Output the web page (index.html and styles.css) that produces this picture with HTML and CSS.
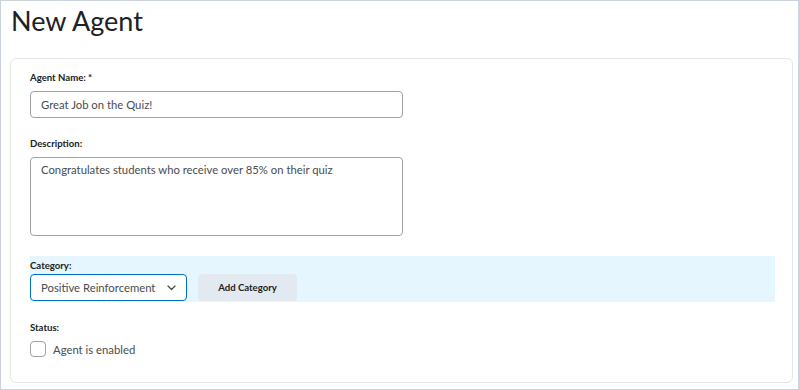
FILE: index.html
```html
<!DOCTYPE html>
<html lang="en">
<head>
    <meta charset="UTF-8">
    <meta name="viewport" content="width=device-width, initial-scale=1.0">
    <title>New Agent</title>
    <link rel="stylesheet" href="styles.css">
</head>
<body>
    <div class="frame">
        <h1>New Agent</h1>
        <div class="card">
            <div class="field">
                <label for="agent-name">Agent Name: *</label>
                <input type="text" id="agent-name" class="text-input" value="Great Job on the Quiz!">
            </div>
            <div class="field">
                <label for="description">Description:</label>
                <textarea id="description" class="text-area">Congratulates students who receive over 85% on their quiz</textarea>
            </div>
            <div class="category-row">
                <label for="category">Category:</label>
                <div class="category-controls">
                    <div class="select" id="category">
                        <span>Positive Reinforcement</span>
                        <svg width="9" height="6" viewBox="0 0 9 6"><polyline points="1,1 4.5,4.5 8,1" fill="none" stroke="#494c4e" stroke-width="1.3" stroke-linecap="round" stroke-linejoin="round"/></svg>
                    </div>
                    <button class="btn">Add Category</button>
                </div>
            </div>
            <div class="field status">
                <label>Status:</label>
                <div class="check-row">
                    <span class="checkbox"></span>
                    <span>Agent is enabled</span>
                </div>
            </div>
        </div>
    </div>
</body>
</html>
```

FILE: styles.css
```css
* {
    box-sizing: border-box;
}

body {
    margin: 0;
    background-color: #fff;
    font-family: Lato, "Noto Sans", sans-serif;
    color: #202122;
}

.frame {
    height: 390px;
    border: 1px solid #cdd3dc;
    border-right-width: 2px;
    padding: 0 5px 0 9px;
}

h1 {
    margin: 0;
    padding: 2px 0 0 1px;
    height: 57px;
    font-size: 27px;
    font-weight: 400;
    line-height: 36px;
    color: #202122;
}

.card {
    height: 325px;
    border: 1px solid #e3e6e9;
    border-radius: 6px;
    padding: 11px 18px 0 19px;
}

label {
    display: block;
    font-size: 9.6px;
    font-weight: 700;
    line-height: 16px;
    color: #202122;
}

.field label {
    margin-bottom: 5px;
}

.text-input,
.text-area {
    display: block;
    width: 373px;
    border: 1px solid #9ea3a6;
    border-radius: 4px;
    padding: 0 10px;
    font-family: inherit;
    font-size: 11.3px;
    color: #494c4e;
    background: #fff;
}

.text-input {
    height: 27px;
    margin-bottom: 18px;
}

.text-area {
    height: 79px;
    padding-top: 3px;
    resize: none;
    line-height: 17px;
    margin-bottom: 20px;
}

.category-row {
    background-color: #e6f6fe;
    padding: 2px 0 1px;
    margin-right: -1px;
    margin-bottom: 18px;
}

.category-controls {
    display: flex;
    gap: 11px;
}

.select {
    width: 157px;
    height: 27px;
    border: 1px solid #006fbf;
    border-radius: 4px;
    background: #fff;
    display: flex;
    align-items: center;
    justify-content: space-between;
    padding: 0 10px 0 10px;
    font-size: 11.3px;
    color: #494c4e;
    white-space: nowrap;
}

.btn {
    width: 99px;
    height: 27px;
    border: none;
    border-radius: 4px;
    background-color: #e3e9f1;
    font-family: inherit;
    font-size: 9.6px;
    font-weight: 700;
    color: #202122;
}

.status label {
    margin-bottom: 5px;
}

.check-row {
    display: flex;
    align-items: center;
    gap: 7px;
    font-size: 11.3px;
    color: #494c4e;
}

.checkbox {
    width: 16px;
    height: 16px;
    border: 1px solid #9ea3a6;
    border-radius: 4px;
    background: #fff;
}
```
